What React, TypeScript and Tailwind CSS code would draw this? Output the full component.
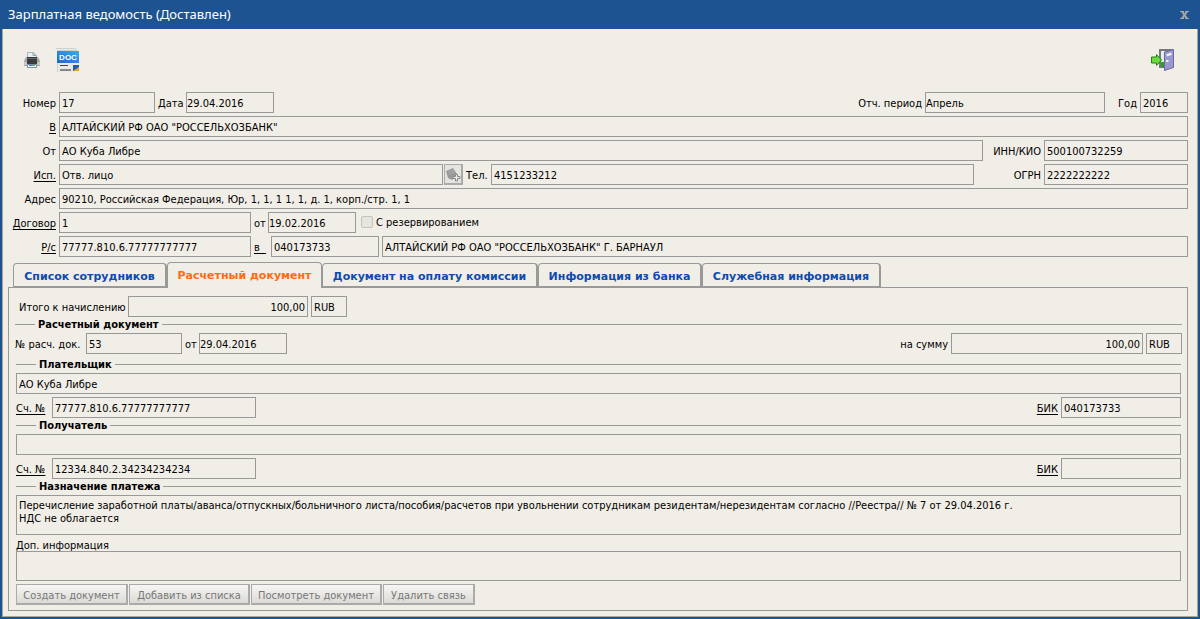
import React from "react";
import clsx from "clsx";

type FieldProps = {
  id: string;
  value?: string;
  className?: string;
  flush?: boolean;
  labelledBy?: string;
  ariaLabel?: string;
};

const Field = ({ id, value = "", className, flush, labelledBy, ariaLabel }: FieldProps) => (
  <input
    id={id}
    type="text"
    readOnly
    defaultValue={value}
    aria-labelledby={labelledBy}
    aria-label={ariaLabel}
    className={clsx(
      "h-[21px] min-w-0 rounded-none border border-[#999] bg-transparent pt-0.5 text-black outline-none",
      flush ? "px-0" : "px-0.5",
      className
    )}
  />
);

type LabelProps = {
  htmlFor: string;
  children: React.ReactNode;
  className?: string;
};

const Label = ({ htmlFor, children, className }: LabelProps) => (
  <label htmlFor={htmlFor} className={clsx("shrink-0 pt-0.5 whitespace-nowrap", className)}>
    {children}
  </label>
);

const LinkLabel = ({ id, children }: { id: string; children: React.ReactNode }) => (
  <a id={id} href="#" className="shrink-0 pt-0.5 whitespace-pre underline underline-offset-2">
    {children}
  </a>
);

// Right aligned first column of the header form
const LabelCell = ({ children }: { children: React.ReactNode }) => (
  <div className="flex w-[53px] shrink-0 justify-end">{children}</div>
);

const Row = ({ children, className }: { children: React.ReactNode; className?: string }) => (
  <div className={clsx("flex items-center gap-[3px]", className)}>{children}</div>
);

const Legend = ({ children, className }: { children: React.ReactNode; className?: string }) => (
  <div className={clsx("flex items-center gap-[3px]", className)}>
    <span className="h-px w-5 bg-[#999]" />
    <h2 className="font-bold">{children}</h2>
    <span className="h-px flex-1 bg-[#999]" />
  </div>
);

const PrinterIcon = () => (
  <svg width="16" height="16" viewBox="0 0 16 16">
    <path d="M3.500 6V.5h6l3 3V6z" fill="#e4f1f2" stroke="#a9b6b8" />
    <path d="M9 .5v3h3" fill="#b9d6da" stroke="#8ea3a5" />
    <path d="M2 5h12l2 4v5H0V9z" fill="#a9a9ac" />
    <path d="M3 5h10v7H3z" fill="#3c3c3f" />
    <path d="M3 6h10v1H3z" fill="#66666a" />
    <path d="M0 10h3v3H0zM13 10h3v3h-3z" fill="#c6c6c9" />
    <path d="M3.500 12.500h9v3h-9z" fill="#f5fbff" stroke="#858d96" />
    <path d="M5 13.500h3" stroke="#3b7ad0" />
    <path d="M8 13.500h3" stroke="#43aa7e" />
    <path d="M13 9h1.500v1.500H13z" fill="#55d048" />
  </svg>
);

const DocIcon = () => (
  <svg width="24" height="24" viewBox="0 0 24 24">
    <defs>
      <linearGradient id="doc-blue" x1="0" x2="1" y1="1" y2="0">
        <stop offset="0" stopColor="#1f66c4" />
        <stop offset="1" stopColor="#43a9f5" />
      </linearGradient>
    </defs>
    <path d="M0 0h21l3 3v21H2V2z" fill="#e9e9e8" />
    <path d="M.5.500H20l2 2H2.500V24" fill="none" stroke="#d0d0ce" />
    <path d="M2 3h22v12H2z" fill="url(#doc-blue)" />
    <text
      x="13"
      y="12"
      textAnchor="middle"
      fill="#fff"
      fontSize="8"
      fontWeight="700"
      fontFamily="'Liberation Sans', sans-serif"
    >
      DOC
    </text>
    <path d="M5 17.500h8" stroke="#444" strokeWidth="1" />
    <path d="M5 22h11" stroke="#888" strokeWidth="2" />
    <path d="M18 17h6v6h-6z" fill="#1d5fae" />
    <path d="M18 23l6-4v4z" fill="#f0a22a" />
  </svg>
);

const ExitIcon = () => (
  <svg width="24" height="24" viewBox="0 0 24 24">
    <path d="M8 1h14v19H8z" fill="#77777c" />
    <path d="M10 3h5v16h-5z" fill="#e8f0ea" />
    <path d="M10 14h5v5h-5z" fill="#2f9c22" />
    <path d="M13.500 4l9-2.500v18l-9 3z" fill="#9a99cf" stroke="#6a69a4" />
    <path d="M15.500 6l5-1.500v2.500l-5 1.500z" fill="#eeeefc" />
    <path d="M15 13h2.500" stroke="#f2f2c8" strokeWidth="2" />
    <path d="M.5 9h5V6.500l5 5.500-5 5.500V15h-5z" fill="#6bdc3b" stroke="#24811a" />
  </svg>
);

const ContactIcon = () => (
  <svg width="15" height="15" viewBox="0 0 15 15">
    <path d="M0 4l7-3 4 6-5 6-4-2z" fill="#999" />
    <path d="M2 5l6-2M3 7l6-2" stroke="#bbb" strokeWidth=".6" />
    <path d="M9.500 7.500h2v2H14v2h-2.500V14h-2v-2.500H7v-2h2.500z" fill="#eee" stroke="#888" />
  </svg>
);

const tabs = [
  { title: "Список сотрудников", width: "w-[154px]" },
  { title: "Расчетный документ", width: "w-[155px]", active: true },
  { title: "Документ на оплату комиссии", width: "w-[216px]" },
  { title: "Информация из банка", width: "w-[164px]" },
  { title: "Служебная информация", width: "w-[179px]" },
];

const actions = [
  { title: "Создать документ", width: "w-[112px]" },
  { title: "Добавить из списка", width: "w-[121px]" },
  { title: "Посмотреть документ", width: "w-[131px]" },
  { title: "Удалить связь", width: "w-[92px]" },
];

const HeaderForm = () => (
  <div className="flex flex-col gap-[3px]">
    <Row>
      <LabelCell>
        <Label htmlFor="number">Номер</Label>
      </LabelCell>
      <Field id="number" value="17" className="w-24" />
      <Label htmlFor="date" className="w-[25px]">Дата</Label>
      <Field id="date" value="29.04.2016" flush className="w-[88px]" />
      <Label htmlFor="period" className="ml-auto">Отч. период</Label>
      <Field id="period" value="Апрель" flush className="w-[180px]" />
      <Label htmlFor="year" className="w-[29px] text-right">Год</Label>
      <Field id="year" value="2016" className="w-12" />
    </Row>
    <Row>
      <LabelCell>
        <LinkLabel id="bank-label">В</LinkLabel>
      </LabelCell>
      <Field
        id="bank"
        labelledBy="bank-label"
        value={'АЛТАЙСКИЙ РФ ОАО "РОССЕЛЬХОЗБАНК"'}
        className="flex-1"
      />
    </Row>
    <Row>
      <LabelCell>
        <Label htmlFor="client">От</Label>
      </LabelCell>
      <Field id="client" value="АО Куба Либре" className="flex-1" />
      <Label htmlFor="inn" className="w-[55px] text-right">ИНН/КИО</Label>
      <Field id="inn" value="500100732259" className="w-36" />
    </Row>
    <Row>
      <LabelCell>
        <LinkLabel id="person-label">Исп.</LinkLabel>
      </LabelCell>
      <div className="flex w-[404px] gap-px">
        <Field id="person" labelledBy="person-label" value="Отв. лицо" className="flex-1" />
        <button
          type="button"
          aria-label="Выбрать исполнителя"
          className="flex h-[21px] w-[19px] items-center justify-center border border-r-2 border-b-2 border-[#aaa] bg-[#e6e4df]"
        >
          <ContactIcon />
        </button>
      </div>
      <Label htmlFor="phone" className="w-[22px]">Тел.</Label>
      <Field id="phone" value="4151233212" className="flex-1" />
      <Label htmlFor="ogrn" className="w-16 text-right">ОГРН</Label>
      <Field id="ogrn" value="2222222222" className="w-36" />
    </Row>
    <Row>
      <LabelCell>
        <Label htmlFor="address">Адрес</Label>
      </LabelCell>
      <Field
        id="address"
        value="90210, Российская Федерация, Юр, 1, 1, 1 1, 1, д. 1, корп./стр. 1, 1"
        className="flex-1"
      />
    </Row>
    <Row>
      <LabelCell>
        <LinkLabel id="contract-label">Договор</LinkLabel>
      </LabelCell>
      <Field id="contract" labelledBy="contract-label" value="1" className="w-48" />
      <Label htmlFor="contract-date" className="w-[11px]">от</Label>
      <Field id="contract-date" value="19.02.2016" flush className="w-[88px]" />
      <div className="flex items-center gap-[3px] pb-0.5 pl-0.5">
        <input
          id="reserve"
          type="checkbox"
          disabled
          className="size-3 appearance-none rounded-[2px] border border-[#c4c2bd] bg-[#e8e5df]"
        />
        <Label htmlFor="reserve">С резервированием</Label>
      </div>
    </Row>
    <Row>
      <LabelCell>
        <LinkLabel id="account-label">Р/с</LinkLabel>
      </LabelCell>
      <Field
        id="account"
        labelledBy="account-label"
        value="77777.810.6.77777777777"
        className="w-48"
      />
      <div className="flex w-[14px]">
        <LinkLabel id="bic-label">{"в  "}</LinkLabel>
      </div>
      <Field id="bic" labelledBy="bic-label" value="040173733" className="w-[108px]" />
      <Field
        id="bic-bank"
        ariaLabel="Банк"
        value={'АЛТАЙСКИЙ РФ ОАО "РОССЕЛЬХОЗБАНК" Г. БАРНАУЛ'}
        className="flex-1"
      />
    </Row>
  </div>
);

type PartyProps = {
  id: string;
  title: string;
  name?: string;
  account: string;
  bic?: string;
  legendClass: string;
};

const Party = ({ id, title, name, account, bic, legendClass }: PartyProps) => (
  <>
    <Legend className={legendClass}>{title}</Legend>
    <div className="flex flex-col gap-[3px]">
      <Field id={`${id}-name`} ariaLabel={title} value={name} className="w-full" />
      <Row>
        <div className="flex w-[33px]">
          <LinkLabel id={`${id}-account-label`}>Сч. №</LinkLabel>
        </div>
        <Field
          id={`${id}-account`}
          labelledBy={`${id}-account-label`}
          value={account}
          className="w-[204px]"
        />
        <div className="ml-auto flex">
          <LinkLabel id={`${id}-bic-label`}>БИК</LinkLabel>
        </div>
        <Field id={`${id}-bic`} labelledBy={`${id}-bic-label`} value={bic} className="w-[120px]" />
      </Row>
    </div>
  </>
);

const PaymentPanel = () => (
  <div className="border border-[#999] pt-2 pr-[5px] pb-[5px] pl-1.5">
    <Row className="pl-1">
      <Label htmlFor="total" className="w-[106px]">Итого к начислению</Label>
      <Field id="total" value="100,00" className="w-[180px] text-right" />
      <Field id="total-currency" ariaLabel="Валюта" value="RUB" className="w-9" />
    </Row>
    <Legend className="h-[15px]">Расчетный документ</Legend>
    <Row className="pt-px">
      <Label htmlFor="doc-number" className="w-[68px]">№ расч. док.</Label>
      <Field id="doc-number" value="53" className="w-24" />
      <Label htmlFor="doc-date" className="w-[11px]">от</Label>
      <Field id="doc-date" value="29.04.2016" flush className="w-[88px]" />
      <Label htmlFor="sum" className="ml-auto">на сумму</Label>
      <Field id="sum" value="100,00" className="w-48 text-right" />
      <Field id="sum-currency" ariaLabel="Валюта" value="RUB" className="w-9" />
    </Row>
    <div className="px-px">
      <Party
        id="payer"
        title="Плательщик"
        name="АО Куба Либре"
        account="77777.810.6.77777777777"
        bic="040173733"
        legendClass="h-[19px] pt-0.5"
      />
      <Party
        id="payee"
        title="Получатель"
        account="12334.840.2.34234234234"
        legendClass="h-4 pb-0.5"
      />
      <Legend className="h-4 pb-0.5">Назначение платежа</Legend>
      <textarea
        readOnly
        aria-label="Назначение платежа"
        defaultValue={
          "Перечисление заработной платы/аванса/отпускных/больничного листа/пособия/расчетов при увольнении сотрудникам резидентам/нерезидентам согласно //Реестра// № 7 от 29.04.2016 г.\nНДС не облагается"
        }
        className="block h-10 w-full resize-none border border-[#999] px-0.5 py-[3px] outline-none"
      />
      <label htmlFor="extra" className="block h-4 pt-1">
        Доп. информация
      </label>
      <textarea
        id="extra"
        readOnly
        className="block h-[30px] w-full resize-none border border-[#999] px-0.5 outline-none"
      />
      <div className="flex gap-px pt-[3px]">
        {actions.map((action) => (
          <button
            key={action.title}
            type="button"
            disabled
            className={clsx(
              "h-[21px] border border-r-2 border-b-2 border-[#aaa] bg-linear-to-b from-[#f7f6f3] to-[#dcdad6] pt-0.5 whitespace-nowrap text-[#777]",
              action.width
            )}
          >
            {action.title}
          </button>
        ))}
      </div>
    </div>
  </div>
);

const App = () => {
  return (
    <div className="min-h-screen bg-[#1e5391] px-0.5 pb-0.5 font-['DejaVu_Sans_Condensed','DejaVu_Sans',sans-serif] text-[11px] leading-[13px] text-black">
      <header className="flex h-[29px] items-center justify-between px-1.5 text-white">
        <h1 className="font-['Noto_Sans',sans-serif] text-[13px]">Зарплатная ведомость (Доставлен)</h1>
        <button type="button" aria-label="Закрыть" className="pr-[3px] text-[#a6a6a6]">
          <svg width="9" height="8" viewBox="0 0 9 8">
            <path d="M0 0h4v1H0zM5 0h4v1H5zM0 7h4v1H0zM5 7h4v1H5z" fill="currentColor" />
            <path d="M2 .5l5 7M7 .5l-5 7" stroke="currentColor" strokeWidth="2" />
          </svg>
        </button>
      </header>

      <main className="border border-t-0 border-[#aaa69c] bg-[#f1eee7] pr-[9px] pb-[5px]">
        {/* Toolbar */}
        <div className="flex h-[63px] items-center justify-between pr-[13px] pb-0.5 pl-[21px]">
          <div className="flex items-center gap-[15px]">
            <button type="button" aria-label="Печать">
              <PrinterIcon />
            </button>
            <button type="button" aria-label="Экспорт в DOC">
              <DocIcon />
            </button>
          </div>
          <button type="button" aria-label="Выход">
            <ExitIcon />
          </button>
        </div>

        <HeaderForm />

        <div className="pt-[5px] pl-[5px]">
          <div role="tablist" className="flex h-[25px] items-end pl-[5px]">
            {tabs.map((tab) => (
              <button
                key={tab.title}
                type="button"
                role="tab"
                aria-selected={!!tab.active}
                className={clsx(
                  "rounded-t border border-[#999] font-['DejaVu_Sans',sans-serif] font-bold whitespace-nowrap",
                  tab.active
                    ? "relative -mb-px h-[26px] border-b-0 bg-[#f1eee7] text-[#ff6a13]"
                    : "h-6 border-r-2 pt-0.5 text-[#0d4bb0]",
                  tab.width
                )}
              >
                {tab.title}
              </button>
            ))}
          </div>
          <PaymentPanel />
        </div>
      </main>
    </div>
  );
};

export default App;
